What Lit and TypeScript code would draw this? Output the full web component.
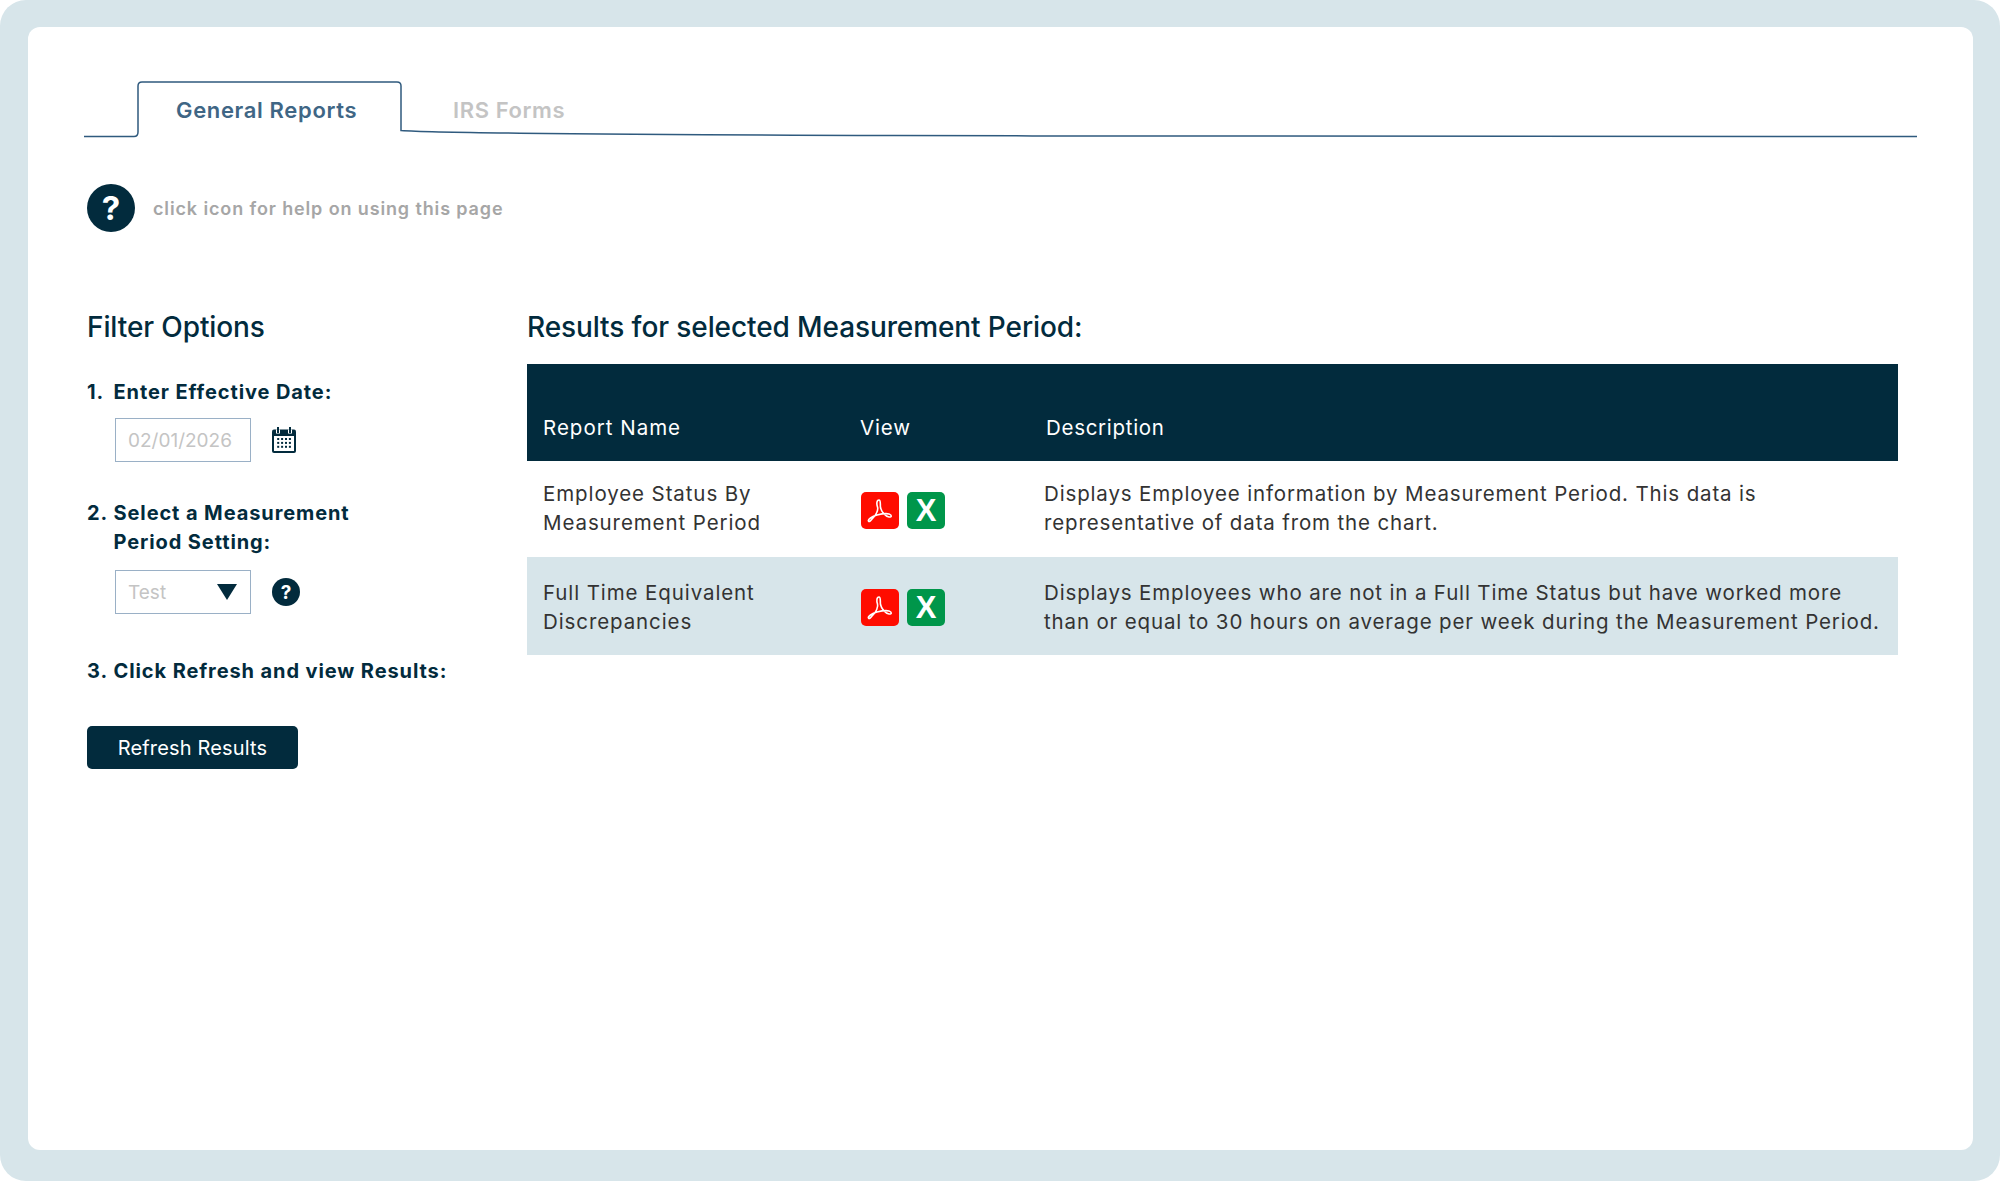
import { LitElement, html, css, svg } from "lit";
import { customElement } from "lit/decorators.js";

const reports = [
  {
    name: ["Employee Status By", "Measurement Period"],
    desc: [
      "Displays Employee information by Measurement Period. This data is",
      "representative of data from the chart.",
    ],
  },
  {
    name: ["Full Time Equivalent", "Discrepancies"],
    desc: [
      "Displays Employees who are not in a Full Time Status but have worked more",
      "than or equal to 30 hours on average per week during the Measurement Period.",
    ],
  },
];

const calendarDots = [0, 1, 2, 3].flatMap((c) =>
  [0, 1, 2].map((r) => svg`<rect x=${5.2 + c * 3.9} y=${11 + r * 3.9} width="2" height="2" fill="#022b3d"></rect>`)
);

@customElement("app-root")
export class AppRoot extends LitElement {
  static styles = css`
    :host {
      display: block;
      width: 2000px;
      height: 1181px;
      background: #fff;
      font-family: "Inter", "Liberation Sans", sans-serif;
      color: #022b3d;
    }
    .frame {
      box-sizing: border-box;
      height: 1181px;
      padding: 27px 27px 31px 28px;
      background: #d7e5ea;
      border-radius: 26px;
    }
    .card {
      box-sizing: border-box;
      height: 100%;
      padding: 54px 75px 0 59px;
      background: #fff;
      border-radius: 12px;
    }
    .tabs {
      position: relative;
      display: flex;
      height: 56px;
      margin: 0 -18px 0 -3px;
      padding-left: 54px;
    }
    .tabs svg {
      position: absolute;
      left: 0;
      top: 0;
    }
    .tab {
      position: relative;
      box-sizing: border-box;
      font-size: 22px;
      font-weight: 600;
      line-height: 59px;
    }
    .tab.active {
      width: 263px;
      padding-left: 38px;
      color: #3f6685;
      letter-spacing: 0.65px;
    }
    .tab.off {
      padding-left: 52px;
      color: #c4c4c4;
      letter-spacing: 0.6px;
    }
    .help-row {
      display: flex;
      align-items: center;
      gap: 18px;
      margin-top: 47px;
      font-size: 18px;
      font-weight: 600;
      letter-spacing: 0.87px;
      color: #a6a6a6;
    }
    .qmark {
      display: flex;
      align-items: center;
      justify-content: center;
      box-sizing: border-box;
      width: 48px;
      height: 48px;
      border-radius: 50%;
      background: #022b3d;
      color: #fff;
      font-size: 33px;
      font-weight: 700;
      letter-spacing: 0;
      flex: none;
    }
    .qmark.small {
      width: 28px;
      height: 28px;
      font-size: 19px;
    }
    .columns {
      display: flex;
      margin-top: 77px;
    }
    .filters {
      width: 440px;
      flex: none;
    }
    .results {
      flex: 1;
    }
    h2 {
      margin: 0;
      font-size: 28px;
      font-weight: 500;
      line-height: 36px;
      letter-spacing: -0.1px;
    }
    .step {
      display: flex;
      margin-top: 33px;
      font-size: 20px;
      font-weight: 700;
      line-height: 29px;
      letter-spacing: 0.9px;
    }
    .step .num {
      width: 26.5px;
      flex: none;
    }
    .step.second {
      margin-top: 37px;
    }
    .step.third {
      margin-top: 43px;
    }
    .control {
      display: flex;
      align-items: center;
      gap: 21px;
      margin: 13px 0 0 28px;
    }
    .step:first-of-type + .control {
      margin-top: 11px;
    }
    .field {
      display: flex;
      align-items: center;
      justify-content: space-between;
      box-sizing: border-box;
      width: 136px;
      height: 44px;
      padding: 0 13px 0 12px;
      border: 1.5px solid #9ab0c6;
      font-size: 19px;
      color: #c4c4c4;
    }
    .arrow {
      width: 0;
      height: 0;
      border-left: 10px solid transparent;
      border-right: 10px solid transparent;
      border-top: 16px solid #022b3d;
    }
    button {
      display: block;
      width: 211px;
      height: 43px;
      margin-top: 40px;
      padding: 0;
      border: 0;
      border-radius: 5px;
      background: #022b3d;
      color: #fff;
      font: 400 20px "Inter", sans-serif;
      letter-spacing: 0.15px;
    }
    .table {
      margin-top: 19px;
      color: #333;
      font-size: 20.5px;
      line-height: 29px;
    }
    .row {
      display: grid;
      grid-template-columns: 317px 184px 1fr;
      align-items: center;
      padding-left: 16px;
      height: 96px;
    }
    .row.head {
      height: 97px;
      align-items: end;
      padding-bottom: 19px;
      box-sizing: border-box;
      background: #022b3d;
      color: #fff;
      letter-spacing: 0.85px;
    }
    .row.head .col-desc {
      padding-left: 2px;
      letter-spacing: 0.7px;
    }
    .row.head .col-name {
      letter-spacing: 1px;
    }
    .row.shaded {
      height: 98px;
      background: #d7e5ea;
    }
    .row.shaded .name,
    .row.shaded .desc {
      padding-top: 1px;
    }
    .row:not(.shaded):not(.head) .name,
    .row:not(.shaded):not(.head) .desc {
      padding-bottom: 2px;
    }
    .name {
      letter-spacing: 0.9px;
    }
    .desc {
      letter-spacing: 0.85px;
    }
    .icons {
      display: flex;
      gap: 8px;
      padding: 3px 0 0 1px;
    }
    .file {
      display: flex;
      align-items: center;
      justify-content: center;
      width: 38px;
      height: 37px;
      border-radius: 5px;
    }
    .file.pdf {
      background: #ff0c00;
    }
    .file.xls {
      background: #00964a;
      color: #fff;
      font: 700 31px "Liberation Sans", sans-serif;
    }
  `;

  render() {
    return html`
      <div class="frame">
        <div class="card">
          <div class="tabs">
            <svg width="1833" height="57" viewBox="0 0 1833 57" fill="none">
              <path
                d="M0 55.5H50Q54 55.5 54 51V5Q54 1 58 1H313Q317 1 317 5V49.5C360 52.5 500 53.5 809 54.5S1400 55.5 1833 55.5"
                stroke="#2f5a7e"
                stroke-width="1.5"
              ></path>
            </svg>
            <div class="tab active">General Reports</div>
            <div class="tab off">IRS Forms</div>
          </div>

          <div class="help-row">
            <div class="qmark">?</div>
            <span>click icon for help on using this page</span>
          </div>

          <div class="columns">
            <div class="filters">
              <h2>Filter Options</h2>
              <div class="step"><span class="num">1.</span><span>Enter Effective Date:</span></div>
              <div class="control">
                <div class="field">02/01/2026</div>
                <svg width="24" height="26" viewBox="0 0 24 26">
                  <rect x="0" y="2.5" width="24" height="23.5" rx="2" fill="#022b3d"></rect>
                  <rect x="2" y="9" width="20" height="15" fill="#fff"></rect>
                  <rect x="4" y="2.5" width="4" height="4" fill="#fff"></rect>
                  <rect x="16" y="2.5" width="4" height="4" fill="#fff"></rect>
                  <rect x="5" y="0" width="2" height="6" fill="#022b3d"></rect>
                  <rect x="17" y="0" width="2" height="6" fill="#022b3d"></rect>
                  ${calendarDots}
                </svg>
              </div>
              <div class="step second">
                <span class="num">2.</span><span>Select a Measurement<br />Period Setting:</span>
              </div>
              <div class="control">
                <div class="field">Test<span class="arrow"></span></div>
                <div class="qmark small">?</div>
              </div>
              <div class="step third"><span class="num">3.</span><span>Click Refresh and view Results:</span></div>
              <button>Refresh Results</button>
            </div>

            <div class="results">
              <h2>Results for selected Measurement Period:</h2>
              <div class="table">
                <div class="row head">
                  <div class="col-name">Report Name</div>
                  <div>View</div>
                  <div class="col-desc">Description</div>
                </div>
                ${reports.map(
                  (r, i) => html`
                    <div class="row ${i % 2 ? "shaded" : ""}">
                      <div class="name">${r.name[0]}<br />${r.name[1]}</div>
                      <div class="icons">
                        <div class="file pdf">
                          <svg width="38" height="37" viewBox="0 0 38 37" fill="none">
                            <path
                              d="M18 8C15.5 8 15.5 12 16.5 15C17.5 18 15 23 12 26C10 28 8.5 30.5 7.5 29C6.5 27.5 11 24.5 16 23C20 22 25 21 28 22C31 23 31 25.5 28 25C24.5 24.5 20.5 20 19.5 15.5C19 12 20 8 18 8Z"
                              stroke="#fff"
                              stroke-width="1.6"
                            ></path>
                          </svg>
                        </div>
                        <div class="file xls">X</div>
                      </div>
                      <div class="desc">${r.desc[0]}<br />${r.desc[1]}</div>
                    </div>
                  `
                )}
              </div>
            </div>
          </div>
        </div>
      </div>
    `;
  }
}
